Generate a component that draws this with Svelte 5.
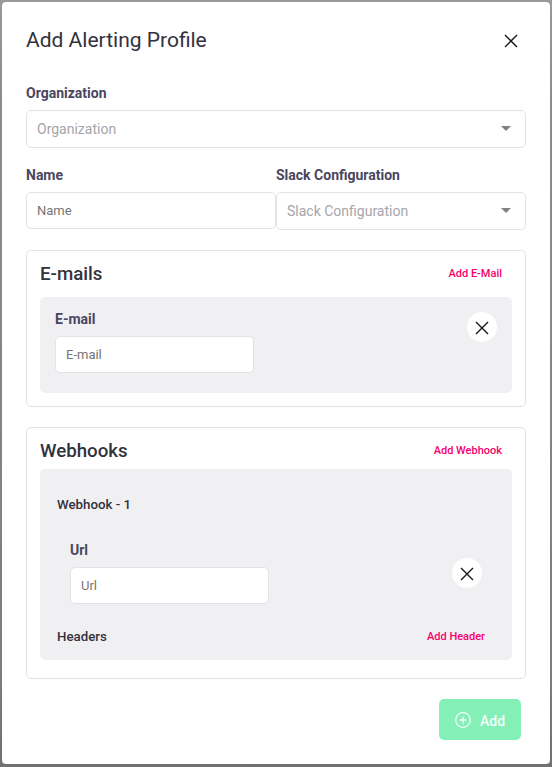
<script>
  let organization = $state('');
  let name = $state('');
  let slack = $state('');
  let email = $state('');
  let url = $state('');
</script>

{#snippet cross()}
  <svg class="cross" width="14" height="14" viewBox="0 0 14 14" aria-hidden="true">
    <path d="M1 1 L13 13 M13 1 L1 13" />
  </svg>
{/snippet}

{#snippet select(label, value)}
  <div class="select" role="combobox" aria-label={label} aria-expanded="false" aria-controls="options" tabindex="0">
    <span>{value || label}</span>
    <svg width="10" height="5" viewBox="0 0 10 5" aria-hidden="true"><path d="M0 0H10L5 5Z" /></svg>
  </div>
{/snippet}

<div class="backdrop">
  <div class="modal" role="dialog" aria-labelledby="title">
    <header>
      <h1 id="title">Add Alerting Profile</h1>
      <button class="close" aria-label="Close">{@render cross()}</button>
    </header>

    <div class="field org">
      <span class="label">Organization</span>
      {@render select('Organization', organization)}
    </div>

    <div class="row">
      <div class="field">
        <label class="label" for="name">Name</label>
        <input id="name" placeholder="Name" bind:value={name} />
      </div>
      <div class="field">
        <span class="label">Slack Configuration</span>
        {@render select('Slack Configuration', slack)}
      </div>
    </div>

    <section class="card emails">
      <div class="head">
        <h2>E-mails</h2>
        <button class="link">Add E-Mail</button>
      </div>
      <div class="panel">
        <div class="field short">
          <label class="label" for="email">E-mail</label>
          <input id="email" placeholder="E-mail" bind:value={email} />
        </div>
        <button class="remove" aria-label="Remove e-mail">{@render cross()}</button>
      </div>
    </section>

    <section class="card webhooks">
      <div class="head">
        <h2>Webhooks</h2>
        <button class="link">Add Webhook</button>
      </div>
      <div class="panel">
        <h3>Webhook - 1</h3>
        <div class="entry">
          <div class="field short">
            <label class="label" for="url">Url</label>
            <input id="url" placeholder="Url" bind:value={url} />
          </div>
          <button class="remove" aria-label="Remove webhook">{@render cross()}</button>
        </div>
        <div class="headers">
          <h3>Headers</h3>
          <button class="link">Add Header</button>
        </div>
      </div>
    </section>

    <footer>
      <button class="add">
        <svg width="16" height="16" viewBox="0 0 16 16" aria-hidden="true">
          <circle cx="8" cy="8" r="7.3" />
          <path d="M8 4.6V11.4M4.6 8H11.4" />
        </svg>
        <span>Add</span>
      </button>
    </footer>
  </div>
</div>

<style>
  :global(body) {
    margin: 0;
    background: #808080;
  }
  .backdrop, .backdrop * {
    box-sizing: border-box;
  }
  .backdrop {
    height: 767px;
    padding: 2px 2px 3px;
    overflow: hidden;
    font-family: Roboto, "Liberation Sans", sans-serif;
    color: #32323c;
    background: linear-gradient(#999 0, #8c8c8c 100px, #858585 400px, #7c7c7c 680px, #707070 767px);
  }
  .modal {
    height: 762px;
    padding: 0 24px;
    background: #fff;
    border-radius: 4px;
  }
  h1, h2, h3 {
    margin: 0;
    font-weight: 500;
  }
  button {
    padding: 0;
    border: 0;
    background: none;
    font-family: inherit;
  }
  header {
    display: flex;
    justify-content: space-between;
    align-items: center;
    height: 76px;
    padding-right: 8px;
  }
  h1 {
    font-size: 21px;
    line-height: 24px;
    font-weight: 400;
  }
  .close {
    display: flex;
    padding-top: 1px;
  }
  .cross path {
    fill: none;
    stroke: #15151c;
    stroke-width: 1.4;
  }
  .field {
    display: flex;
    flex-direction: column;
    flex: 1;
  }
  .label {
    height: 26px;
    font-size: 14px;
    line-height: 18px;
    font-weight: 700;
    color: #4a4660;
  }
  .org {
    padding-top: 6px;
  }
  .select, input {
    width: 100%;
    border: 1px solid #e2e2e8;
    border-radius: 5px;
    background: #fff;
    padding: 0 10px;
    font-family: inherit;
  }
  .select {
    display: flex;
    align-items: center;
    justify-content: space-between;
    height: 38px;
    padding-right: 14px;
    font-size: 14px;
    color: #a5a5ab;
  }
  .select svg {
    margin-bottom: 1px;
  }
  .select path {
    fill: #808086;
  }
  input {
    height: 37px;
    font-size: 13px;
    outline: 0;
  }
  input::placeholder {
    color: #757575;
  }
  .row {
    display: flex;
    padding-top: 18px;
  }
  .card {
    margin-top: 20px;
    padding: 0 13px;
    border: 1px solid #e2e2e8;
    border-radius: 5px;
  }
  .emails {
    height: 157px;
  }
  .webhooks {
    height: 252px;
  }
  .head {
    display: flex;
    align-items: center;
    justify-content: space-between;
    height: 46px;
    padding-right: 10px;
  }
  .webhooks .head {
    height: 41px;
    padding-top: 5px;
  }
  h2 {
    font-size: 18.72px;
    line-height: 22px;
  }
  .link {
    color: #f9006c;
    font-size: 11px;
    line-height: 14px;
    font-weight: 500;
  }
  .panel {
    background: #f0f0f3;
    border-radius: 5px;
  }
  .emails .panel {
    display: flex;
    justify-content: space-between;
    height: 96px;
    padding: 13px 15px 0;
  }
  .short {
    flex: 0 0 199px;
  }
  .remove {
    display: flex;
    align-items: center;
    justify-content: center;
    width: 30px;
    height: 30px;
    margin-top: 2px;
    padding-top: 2px;
    border-radius: 50%;
    background: #fff;
  }
  .webhooks .panel {
    height: 191px;
    padding: 28px 17px 0;
  }
  h3 {
    font-size: 13.28px;
    line-height: 16px;
  }
  .entry {
    display: flex;
    justify-content: space-between;
    padding: 28px 13px 0;
  }
  .entry .remove {
    margin-top: 17px;
  }
  .headers {
    display: flex;
    align-items: center;
    justify-content: space-between;
    padding: 25px 10px 0 0;
  }
  footer {
    display: flex;
    justify-content: flex-end;
    padding: 20px 5px 0 0;
  }
  .add {
    display: flex;
    align-items: center;
    gap: 9px;
    width: 82px;
    height: 41px;
    padding: 1px 0 0 16px;
    border-radius: 5px;
    background: #84f0b8;
    color: #f2fff8;
    font-size: 14px;
    font-weight: 500;
  }
  .add span {
    padding-top: 2px;
  }
  .add svg {
    fill: none;
    stroke: #f2fff8;
    stroke-width: 1.3;
  }
</style>
